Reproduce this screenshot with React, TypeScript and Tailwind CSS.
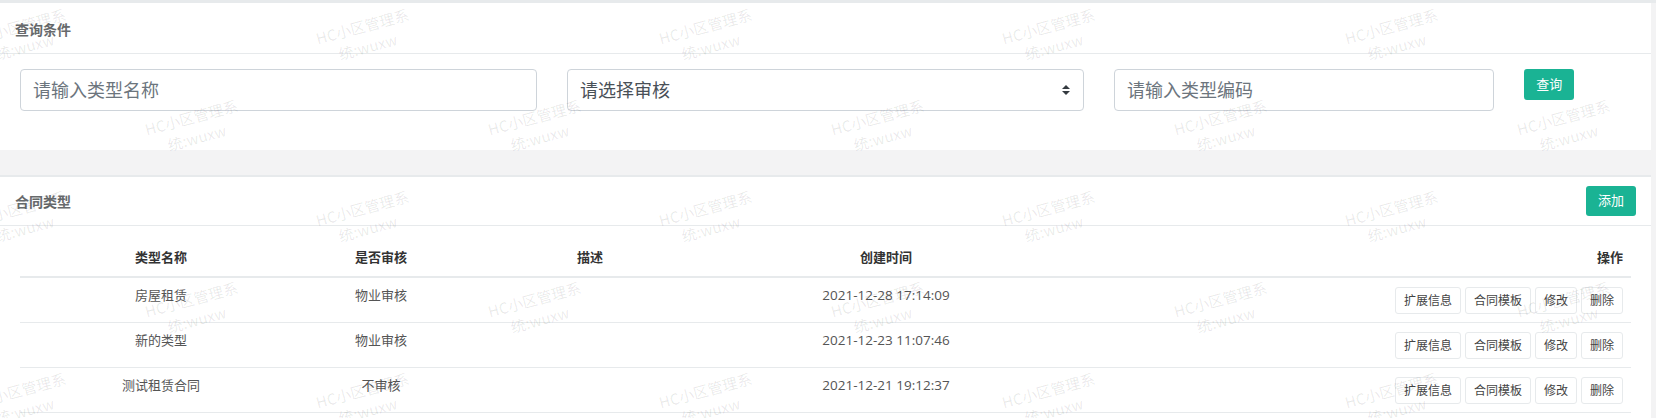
import React from "react";

const rows = [
  { name: "房屋租赁", audit: "物业审核", desc: "", time: "2021-12-28 17:14:09" },
  { name: "新的类型", audit: "物业审核", desc: "", time: "2021-12-23 11:07:46" },
  { name: "测试租赁合同", audit: "不审核", desc: "", time: "2021-12-21 19:12:37" },
];

const WM_ROWS = [36, 127, 218, 309, 400];

function watermarkSpots() {
  const out: { x: number; y: number }[] = [];
  WM_ROWS.forEach((y, i) => {
    const xs = i % 2 === 0 ? [22, 365, 708, 1051, 1394] : [194, 537, 880, 1223, 1566];
    xs.forEach((x) => out.push({ x, y }));
  });
  return out;
}

function ActionButton({ label }: { label: string }) {
  return (
    <button className="flex h-[27px] items-center justify-center rounded-[3px] border border-[#e7eaec] bg-white px-[8px] text-[12px] leading-[18px] text-[#444]">
      {label}
    </button>
  );
}

export default function App() {
  const cols = "grid grid-cols-[282px_158px_260px_332px_1fr]";
  return (
    <div className="relative h-[418px] overflow-hidden bg-[#f3f3f4] font-['Open_Sans','Noto_Sans_CJK_SC',sans-serif] text-[13px] text-[#676a6c]">
      <div className="h-[3px] bg-[#e7eaec]" />

      {/* Panel 1: query conditions */}
      <div className="mr-[5px] bg-white">
        <div className="flex h-[51px] items-center border-b border-[#e7eaec] px-[15px] pt-[2px]">
          <h5 className="text-[14px] font-bold leading-[17px] text-[#676a6c]">查询条件</h5>
        </div>
        <div className="h-[96px] px-[20px] pt-[15px]">
          <div className="-mx-[15px] flex">
            <div className="w-1/3 px-[15px]">
              <input
                placeholder="请输入类型名称"
                className="h-[42px] w-full rounded-[4px] border border-[#ced4da] bg-white px-[12px] text-[18px] text-[#495057] outline-none placeholder:text-[#6c757d]"
              />
            </div>
            <div className="w-1/3 px-[15px]">
              <div className="flex h-[42px] w-full items-center justify-between rounded-[4px] border border-[#ced4da] bg-white pl-[12px] pr-[13px] text-[18px] text-[#495057]">
                <span>请选择审核</span>
                <svg width="8" height="10" viewBox="0 0 4 5">
                  <path fill="#343a40" d="M2 0L0 2h4zm0 5L0 3h4z" />
                </svg>
              </div>
            </div>
            <div className="w-1/4 px-[15px]">
              <input
                placeholder="请输入类型编码"
                className="h-[42px] w-full rounded-[4px] border border-[#ced4da] bg-white px-[12px] text-[18px] text-[#495057] outline-none placeholder:text-[#6c757d]"
              />
            </div>
            <div className="w-1/12 px-[15px]">
              <button className="flex h-[31px] w-[50px] items-center justify-center rounded-[3px] bg-[#1ab394] text-[13px] text-white">
                查询
              </button>
            </div>
          </div>
        </div>
      </div>

      {/* Panel 2: contract types */}
      <div className="mr-[5px] mt-[25px] border-t-2 border-[#e7eaec] bg-white">
        <div className="flex h-[49px] items-center justify-between border-b border-[#e7eaec] px-[15px]">
          <h5 className="text-[14px] font-bold leading-[17px] text-[#676a6c]">合同类型</h5>
          <button className="flex h-[30px] w-[50px] items-center justify-center rounded-[3px] bg-[#1ab394] text-[13px] text-white">
            添加
          </button>
        </div>
        <div className="px-[20px] pb-[20px] pt-[14px]">
          <div className={`${cols} h-[38px] border-b-2 border-[#e7eaec] font-bold text-[#333]`}>
            <div className="px-[8px] pt-[8px] text-center leading-[18.57px]">类型名称</div>
            <div className="px-[8px] pt-[8px] text-center leading-[18.57px]">是否审核</div>
            <div className="px-[8px] pt-[8px] text-center leading-[18.57px]">描述</div>
            <div className="px-[8px] pt-[8px] text-center leading-[18.57px]">创建时间</div>
            <div className="px-[8px] pt-[8px] text-right leading-[18.57px]">操作</div>
          </div>
          {rows.map((r) => (
            <div key={r.time} className={`${cols} h-[45px] border-b border-[#e7eaec] text-[#555]`}>
              <div className="px-[8px] pt-[8px] text-center leading-[18.57px]">{r.name}</div>
              <div className="px-[8px] pt-[8px] text-center leading-[18.57px]">{r.audit}</div>
              <div className="px-[8px] pt-[8px] text-center leading-[18.57px]">{r.desc}</div>
              <div className="px-[8px] pt-[8px] text-center text-[13.5px] leading-[18.57px]">{r.time}</div>
              <div className="flex justify-end gap-[4px] px-[8px] pt-[9px]">
                <ActionButton label="扩展信息" />
                <ActionButton label="合同模板" />
                <ActionButton label="修改" />
                <ActionButton label="删除" />
              </div>
            </div>
          ))}
        </div>
      </div>

      {/* Watermarks */}
      {watermarkSpots().map((p, i) => (
        <div
          key={i}
          className="pointer-events-none absolute z-10 flex -translate-x-1/2 -translate-y-1/2 -rotate-[15deg] flex-col items-center whitespace-nowrap font-['Noto_Sans_CJK_SC',sans-serif] text-[15px] leading-[21px] text-[rgba(0,0,0,0.09)]"
          style={{ left: p.x, top: p.y }}
        >
          <span>HC小区管理系</span>
          <span>统:wuxw</span>
        </div>
      ))}
    </div>
  );
}
